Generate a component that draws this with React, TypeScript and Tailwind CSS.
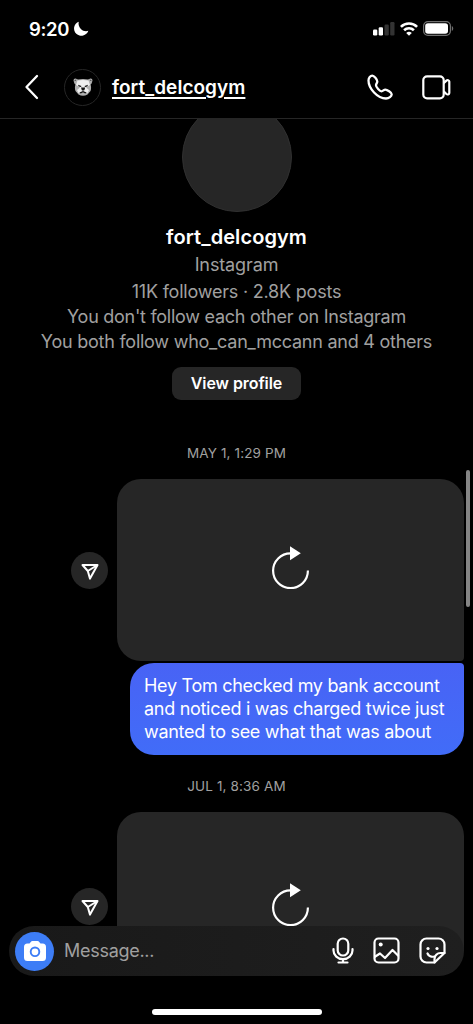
import React from 'react';

type Message = {
  id: number;
  date: string;
  text?: string;
};

const messages: Message[] = [
  { id: 1, date: 'MAY 1, 1:29 PM', text: 'Hey Tom checked my bank account and noticed i was charged twice just wanted to see what that was about' },
  { id: 2, date: 'JUL 1, 8:36 AM' },
];

const BearLogo: React.FC = () => (
  <svg className="-mt-[1px]" width="20" height="18" viewBox="0 0 20 18">
    <path d="M.5 2.500Q.5.500 2.500.6L5 1.600Q10 .2 15 1.600L17.500.6Q19.500.5 19.500 2.500L18.600 5.500 17.600 6.500Q18.600 10 17.500 13L14.500 16.500Q10 19 5.500 16.500L2.500 13Q1.400 10 2.400 6.500L1.400 5.500Z" fill="#b0b0b0" />
    <path d="M4.500 2.600Q10 1.200 15.500 2.600L17 7 13 9.500 16 12 14.500 15H5.500L4 12 7 9.500 3 7Z" fill="#efefef" />
    <path d="m5 6.800 3.500 1.300-.6.900-2.200-.4ZM15 6.800l-3.500 1.300.6.900 2.200-.4ZM8 9.600h4.200l-.8 2.600H8.800ZM6.300 14.600l3.700-1.500 3.700 1.500-1.400.9-2.300-.9-2.300.9Z" fill="#141414" />
    <path d="m1.600 2.600 1.600-.6M18.400 2.600 16.800 2M10 12v1.500" stroke="#333" strokeWidth=".9" />
  </svg>
);

const StatusBar: React.FC = () => (
  <div className="flex h-[57px] shrink-0 items-center justify-between pl-[29px] pr-[19px]">
    <div className="flex items-center gap-[4px]">
      <span className="text-[18.5px] font-semibold leading-6 tracking-[-0.35px]">9:20</span>
      <svg width="16" height="16" viewBox="0 0 16 16" fill="#fff">
        <path d="M5.800.7A7.300 7.300 0 1 0 15.300 9.800C12.500 10.700 9.800 9.900 7.900 7.900 5.900 5.900 5.100 3.200 5.800.7Z" />
      </svg>
    </div>
    <div className="flex items-center gap-[5px]">
      <svg width="22" height="14" viewBox="0 0 22 14">
        <rect x="0" y="7.500" width="4.300" height="6" rx="1.200" fill="#fff" />
        <rect x="5.700" y="5.200" width="4.300" height="8.300" rx="1.200" fill="#fff" />
        <rect x="11.500" y="2.500" width="4.300" height="11" rx="1.200" fill="#333" />
        <rect x="17.200" y="0" width="4.300" height="13.500" rx="1.200" fill="#333" />
      </svg>
      <svg width="18" height="14" viewBox="0 0 18 14" fill="none" stroke="#fff" strokeWidth="2.600">
        <path d="M.9 4.900a11.500 11.500 0 0 1 16.200 0" />
        <path d="M4.100 8.200a7 7 0 0 1 9.800 0" />
        <path d="M9 13.800 6.200 11a4 4 0 0 1 5.600 0Z" fill="#fff" stroke="none" />
      </svg>
      <svg width="31" height="15" viewBox="0 0 31 15">
        <rect x=".6" y=".6" width="26.800" height="13.800" rx="4.300" fill="none" stroke="#6f6f6f" strokeWidth="1.200" />
        <rect x="2.200" y="2.200" width="22.800" height="10.600" rx="2.800" fill="#fff" />
        <path d="M28.800 5v5c1.900-.8 1.900-4.200 0-5Z" fill="#6f6f6f" />
      </svg>
    </div>
  </div>
);

const Header: React.FC = () => (
  <header className="flex h-[62px] shrink-0 items-center border-b border-[#262626] pl-[24px] pr-[22px]">
    <svg className="-mt-[2px]" width="16" height="26" viewBox="0 0 16 26" fill="none" stroke="#fff" strokeWidth="2.300" strokeLinecap="round" strokeLinejoin="round">
      <path d="M13 2 2.500 13 13 24" />
    </svg>
    <div className="-mt-[1px] ml-[24px] flex size-[37px] items-center justify-center rounded-full border border-[#262626]">
      <BearLogo />
    </div>
    <h1 className="mt-[1px] ml-[11px] text-[19px] font-semibold leading-6 tracking-[0.04px] underline decoration-[1.500px] underline-offset-[3px]">fort_delcogym</h1>
    <svg className="-mt-[1px] ml-auto" width="26" height="26" viewBox="0 0 26 26" fill="none" stroke="#fff" strokeWidth="2.300" strokeLinejoin="round">
      <path d="M5.300 1.600C3.500 1.600 1.500 3.600 1.500 6.500 1.500 14.500 10.500 24.500 19 24.500c3 0 5.700-2.200 5.700-4.200 0-1.700-4.700-4.700-6.400-4.700-1.500 0-2.300 1.700-3.800 1.700-1.700 0-5.500-4-5.500-6 0-1.500 1.300-2.300 1.300-3.800 0-2-3.300-5.900-5-5.900Z" />
    </svg>
    <svg className="-mt-[1px] ml-[29px]" width="29" height="25" viewBox="0 0 29 25" fill="none" stroke="#fff" strokeWidth="2.200" strokeLinejoin="round">
      <rect x="1.300" y="1.300" width="20.400" height="22" rx="3.800" />
      <path d="m21.700 8.200 2.700-2.600c1-.9 2.900-.5 2.900 1v11.400c0 1.500-1.900 1.900-2.900 1l-2.700-2.600" />
    </svg>
  </header>
);

const Profile: React.FC = () => (
  <section className="flex shrink-0 flex-col items-center text-center">
    <div className="-mt-[17px] size-[110px] shrink-0 rounded-full border border-[#303030] bg-[#262626]" />
    <h2 className="mt-[11px] text-[20px] font-semibold leading-7 tracking-[0.08px]">fort_delcogym</h2>
    <p className="text-[18px] leading-7 tracking-[-0.12px] text-[#a0a0a0]">Instagram</p>
    <p className="text-[18px] leading-[25px] tracking-[-0.21px] text-[#a0a0a0]">11K followers · 2.8K posts</p>
    <p className="text-[18px] leading-[25px] tracking-[-0.27px] text-[#a0a0a0]">You don't follow each other on Instagram</p>
    <p className="whitespace-nowrap text-[18px] leading-[25px] tracking-[-0.24px] text-[#a0a0a0]">You both follow who_can_mccann and 4 others</p>
    <button className="mt-[13px] h-[33px] w-[129px] rounded-[9px] bg-[#262626] pb-[1px] text-[16px] font-semibold tracking-[-0.08px]">View profile</button>
  </section>
);

const SharedPost: React.FC<{ tall: boolean }> = ({ tall }) => (
  <div className="flex items-center justify-end gap-[9px] pr-[9px]">
    <div className="flex size-[37px] items-center justify-center rounded-full bg-[#262626]">
      <svg className="mt-[3px]" width="18" height="18" viewBox="0 0 18 18" fill="none" stroke="#fff" strokeWidth="2" strokeLinejoin="round">
        <path d="M1.500 2h15L9 15.600 6.800 8Z" />
        <path d="M6.800 8 16.500 2" />
      </svg>
    </div>
    <div className={`flex w-[347px] items-center justify-center rounded-[24px] rounded-br-[4px] bg-[#262626] ${tall ? 'h-[189px]' : 'h-[182px]'}`}>
      <svg className="-mt-[6px]" width="38" height="44" viewBox="0 0 38 44">
        <path d="M19.500 8.300h-1a17.400 17.400 0 1 0 17.400 17.300" fill="none" stroke="#fff" strokeWidth="2.200" />
        <path d="M18 1.200v14l10.800-6.900Z" fill="#fff" />
      </svg>
    </div>
  </div>
);

const Composer: React.FC = () => (
  <div className="relative mx-[9px] -mt-[25px] flex h-[50px] shrink-0 items-center rounded-full bg-linear-to-r from-[#191919] to-[#1f1f1f] pl-[6px] pr-[18px]">
    <div className="flex size-[39px] items-center justify-center rounded-full bg-[#3d7df6]">
      <svg width="22" height="20" viewBox="0 0 22 20">
        <path d="M3.500 2.500h2l1.300-1.500Q7.300 0 8.500 0h5q1.200 0 1.700 1l1.300 1.500h2Q22 2.500 22 6v10.500Q22 20 18.500 20h-15Q0 20 0 16.500V6Q0 2.500 3.500 2.500Z" fill="#fff" />
        <circle cx="11" cy="10.800" r="4.300" fill="none" stroke="#3d7df6" strokeWidth="1.900" />
      </svg>
    </div>
    <span className="-mt-[2px] ml-[10px] text-[18px] tracking-[-0.28px] text-[#a0a0a0]">Message...</span>
    <svg className="-mt-[1px] ml-auto" width="22" height="27" viewBox="0 0 22 27" fill="none" stroke="#fff" strokeWidth="2.200" strokeLinecap="round">
      <rect x="5.700" y="1.500" width="10.600" height="17" rx="5.300" />
      <path d="M1.500 12v1.500a9.500 8.700 0 0 0 19 0V12M11 22.500v3M6.500 25.500h9" />
    </svg>
    <svg className="-mt-[1px] ml-[19px]" width="27" height="27" viewBox="0 0 27 27" fill="none" stroke="#fff" strokeWidth="2.200" strokeLinejoin="round">
      <rect x="1.500" y="1.500" width="24" height="24" rx="4" />
      <circle cx="7.700" cy="7.500" r="2" fill="#fff" stroke="none" />
      <path d="m1.500 20 5.500-3.500 5 4.500 7.500-8 6 6" />
    </svg>
    <svg className="-mt-[1px] ml-[19px]" width="27" height="27" viewBox="0 0 27 27" fill="none" stroke="#fff" strokeWidth="2.200" strokeLinecap="round" strokeLinejoin="round">
      <path d="M15.500 25.500H7.500a6 6 0 0 1-6-6v-12a6 6 0 0 1 6-6h12a6 6 0 0 1 6 6V16Z" />
      <path d="M15.500 25.500V22a6 6 0 0 1 6-6h4" />
      <path d="M8.500 16.500c1 2.500 4 3.800 7 3" />
      <circle cx="9" cy="11.500" r="1.600" fill="#fff" stroke="none" />
      <circle cx="18" cy="11.500" r="1.600" fill="#fff" stroke="none" />
    </svg>
  </div>
);

const App: React.FC = () => {
  return (
    <div className="relative flex h-[1024px] w-[473px] flex-col overflow-hidden bg-black font-['Inter',sans-serif] text-white">
      <StatusBar />
      <Header />
      <main className="flex h-[832px] shrink-0 flex-col overflow-hidden">
        <Profile />
        <div className="mt-[41px] flex shrink-0 flex-col gap-[19px]">
          {messages.map((message) => (
            <div key={message.id} className="flex flex-col">
              <p className="mb-[14px] text-center text-[13.500px] leading-6 tracking-[0.14px] text-[#a0a0a0]">{message.date}</p>
              <SharedPost tall={!message.text} />
              {message.text && (
                <p className="ml-[130px] mr-[9px] mt-[2px] h-[92px] rounded-[24px] rounded-tr-[4px] bg-linear-to-b from-[#4863f5] to-[#416cf8] pl-[14px] pr-[14px] pt-[11px] text-[18px] leading-[23px] tracking-[-0.29px]">
                  {message.text}
                </p>
              )}
            </div>
          ))}
        </div>
      </main>
      <Composer />
      <div className="mx-auto mt-[33px] h-[6px] w-[170px] shrink-0 rounded-full bg-white" />
      {/* scroll thumb over the thread */}
      <div className="absolute right-[3px] top-[470px] h-[137px] w-[4px] rounded-full bg-[#858585]" />
    </div>
  );
};

export default App;
